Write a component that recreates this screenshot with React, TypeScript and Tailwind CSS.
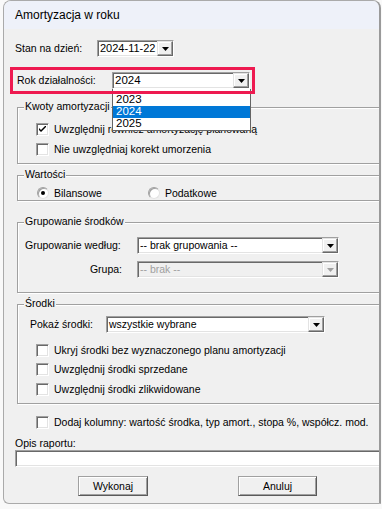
import React from "react";

const sunken =
  "border border-t-[#a0a0a0] border-l-[#a0a0a0] border-r-white border-b-white shadow-[inset_1px_1px_0_#696969,inset_-1px_-1px_0_#e3e3e3]";

function Arrow({ disabled }: { disabled?: boolean }) {
  return (
    <svg width="7" height="4" viewBox="0 0 7 4">
      <polygon points="0,0 7,0 3.5,4" fill={disabled ? "#a0a0a0" : "#000"} />
    </svg>
  );
}

function Combo({
  text,
  className,
  disabled,
}: {
  text: string;
  className: string;
  disabled?: boolean;
}) {
  return (
    <div
      className={`relative flex h-[17px] items-center pl-[2px] ${sunken} ${
        disabled ? "bg-[#f0f0f0] text-[#a0a0a0]" : "bg-white text-black"
      } ${className}`}
    >
      <span className="leading-[13px]">{text}</span>
      <div className="absolute right-0 top-0 bottom-0 flex w-[16px] items-center justify-center border border-t-[#e3e3e3] border-l-[#e3e3e3] border-r-[#696969] border-b-[#696969] bg-[#f0f0f0] shadow-[inset_-1px_-1px_0_#a0a0a0,inset_1px_1px_0_#fff]">
        <Arrow disabled={disabled} />
      </div>
    </div>
  );
}

function Check({ checked }: { checked?: boolean }) {
  return (
    <div className="flex h-[13px] w-[13px] shrink-0 items-center justify-center border border-t-[#a0a0a0] border-l-[#a0a0a0] border-r-white border-b-white bg-white shadow-[inset_1px_1px_0_#696969,inset_-1px_-1px_0_#e3e3e3]">
      {checked && (
        <svg width="7" height="7" viewBox="0 0 7 7">
          <path d="M0 2 L0 4 L2 6 L7 1 L7 -1 L2 4 Z" fill="#000" />
        </svg>
      )}
    </div>
  );
}

function CheckRow({
  label,
  checked,
  className,
}: {
  label: string;
  checked?: boolean;
  className: string;
}) {
  return (
    <div className={`flex h-[13px] items-center ${className}`}>
      <Check checked={checked} />
      <span className="ml-[5px] whitespace-nowrap leading-[13px]">{label}</span>
    </div>
  );
}

function Radio({ on }: { on?: boolean }) {
  return (
    <div className="flex h-[12px] w-[12px] shrink-0 items-center justify-center rounded-full border border-t-[#a0a0a0] border-l-[#a0a0a0] border-r-[#e3e3e3] border-b-[#e3e3e3] bg-white shadow-[inset_1px_1px_0_#a0a0a0]">
      {on && <div className="h-[4px] w-[4px] rounded-full bg-black" />}
    </div>
  );
}

function Group({
  label,
  className,
  children,
}: {
  label: string;
  className: string;
  children?: React.ReactNode;
}) {
  return (
    <div
      className={`relative ml-[13px] w-[380px] shrink-0 border border-[#a0a0a0] shadow-[inset_1px_1px_0_#fff,1px_1px_0_#fff] ${className}`}
    >
      <span className="absolute left-[6px] top-[-8px] bg-[#f0f0f0] px-[1px] leading-[13px]">
        {label}
      </span>
      {children}
    </div>
  );
}

export default function App() {
  return (
    <div className="h-[509px] w-[382px] overflow-hidden bg-[#f9f9f9] font-['Liberation_Sans',Arial,sans-serif] text-[10.5px] text-black">
      <div className="ml-[3px] flex h-[504px] w-[378px] flex-col overflow-hidden rounded-t-[8px] rounded-bl-[6px] border border-r-2 border-[#aaaaaa] border-r-[#9a9a9a] bg-[#f0f0f0]">
        {/* Title bar */}
        <div className="flex h-[28px] shrink-0 items-center bg-[#eef1f9] pl-[11px] text-[12px]">
          Amortyzacja w roku
        </div>

        {/* Stan na dzień */}
        <div className="mt-[11px] flex h-[17px] items-center pl-[11px]">
          <span className="w-[82px] leading-[13px]">Stan na dzień:</span>
          <Combo text="2024-11-22" className="w-[77px] text-[11px]" />
        </div>

        {/* Rok działalności */}
        <div className="relative z-20 ml-[6px] mt-[10px] flex h-[27px] w-[245px] shrink-0 items-center pl-[7px]">
          <span className="w-[95px] leading-[13px]">Rok działalności:</span>
          <div className="relative">
            <Combo text="2024" className="w-[138px] text-[11.5px]" />
            <div className="absolute left-0 top-[17px] z-10 w-[139px] border-x border-b border-[#646464] bg-white pt-[5px] text-[11.5px]">
              <div className="flex h-[12px] items-center pl-[3px]">2023</div>
              <div className="flex h-[12px] items-center bg-[#0078d7] pl-[3px] text-white">
                2024
              </div>
              <div className="flex h-[12px] items-center pl-[3px]">2025</div>
            </div>
          </div>
          <div className="pointer-events-none absolute inset-0 z-30 border-[3px] border-[#ee1a50]" />
        </div>

        {/* Kwoty amortyzacji */}
        <Group label="Kwoty amortyzacji" className="z-0 mt-[13px] h-[57px] pt-[15px]">
          <CheckRow
            checked
            className="ml-[18px]"
            label="Uwzględnij również amortyzację planowaną"
          />
          <CheckRow className="ml-[18px] mt-[7px]" label="Nie uwzględniaj korekt umorzenia" />
        </Group>

        {/* Wartości */}
        <Group label="Wartości" className="mt-[11px] h-[26px] pt-[11px]">
          <div className="flex h-[12px] items-center">
            <div className="ml-[19px] flex items-center">
              <Radio on />
              <span className="ml-[5px] leading-[13px]">Bilansowe</span>
            </div>
            <div className="ml-[46px] flex items-center">
              <Radio />
              <span className="ml-[5px] leading-[13px]">Podatkowe</span>
            </div>
          </div>
        </Group>

        {/* Grupowanie środków */}
        <Group label="Grupowanie środków" className="mt-[21px] h-[71px] pt-[14px]">
          <div className="flex h-[17px] items-center">
            <span className="ml-[7px] w-[112px] leading-[13px]">Grupowanie według:</span>
            <Combo text="-- brak grupowania --" className="w-[202px]" />
          </div>
          <div className="mt-[7px] flex h-[17px] items-center">
            <span className="w-[119px] pr-[15px] text-right leading-[13px]">Grupa:</span>
            <Combo disabled text="-- brak --" className="w-[202px]" />
          </div>
        </Group>

        {/* Środki */}
        <Group label="Środki" className="mt-[11px] h-[100px] pt-[11px]">
          <div className="flex h-[17px] items-center">
            <span className="ml-[12px] w-[76px] leading-[13px]">Pokaż środki:</span>
            <Combo text="wszystkie wybrane" className="w-[219px]" />
          </div>
          <CheckRow className="ml-[18px] mt-[11px]" label="Ukryj środki bez wyznaczonego planu amortyzacji" />
          <CheckRow className="ml-[18px] mt-[6px]" label="Uwzględnij środki sprzedane" />
          <CheckRow className="ml-[18px] mt-[7px]" label="Uwzględnij środki zlikwidowane" />
        </Group>

        <CheckRow
          className="ml-[32px] mt-[12px]"
          label="Dodaj kolumny: wartość środka, typ amort., stopa %, współcz. mod."
        />

        <div className="ml-[11px] mt-[8px] h-[13px] leading-[13px]">Opis raportu:</div>
        <div className={`ml-[11px] h-[17px] w-[380px] shrink-0 bg-white ${sunken}`} />

        <div className="mt-[9px] flex h-[20px]">
          <button className="ml-[74px] h-[20px] w-[70px] border border-t-[#a0a0a0] border-l-[#a0a0a0] border-r-[#5a5a5a] border-b-[#5a5a5a] bg-[#f0f0f0] leading-[13px] shadow-[inset_1px_1px_0_#fff,inset_-1px_-1px_0_#a0a0a0]">
            Wykonaj
          </button>
          <button className="ml-[90px] h-[20px] w-[79px] border border-t-[#a0a0a0] border-l-[#a0a0a0] border-r-[#5a5a5a] border-b-[#5a5a5a] bg-[#f0f0f0] leading-[13px] shadow-[inset_1px_1px_0_#fff,inset_-1px_-1px_0_#a0a0a0]">
            Anuluj
          </button>
        </div>
      </div>
    </div>
  );
}
